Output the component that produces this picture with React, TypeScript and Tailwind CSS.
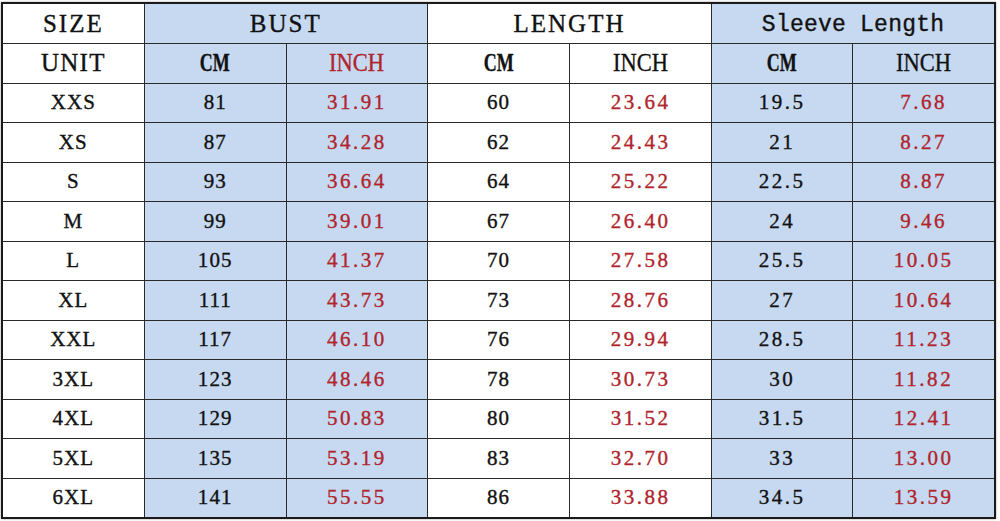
const rows: [string, string, string, string, string, string, string][] = [
  ["XXS", "81", "31.91", "60", "23.64", "19.5", "7.68"],
  ["XS", "87", "34.28", "62", "24.43", "21", "8.27"],
  ["S", "93", "36.64", "64", "25.22", "22.5", "8.87"],
  ["M", "99", "39.01", "67", "26.40", "24", "9.46"],
  ["L", "105", "41.37", "70", "27.58", "25.5", "10.05"],
  ["XL", "111", "43.73", "73", "28.76", "27", "10.64"],
  ["XXL", "117", "46.10", "76", "29.94", "28.5", "11.23"],
  ["3XL", "123", "48.46", "78", "30.73", "30", "11.82"],
  ["4XL", "129", "50.83", "80", "31.52", "31.5", "12.41"],
  ["5XL", "135", "53.19", "83", "32.70", "33", "13.00"],
  ["6XL", "141", "55.55", "86", "33.88", "34.5", "13.59"],
]

const blue = "bg-[#c6d9f0]"
const red = "text-[#b0242c]"
const cell = "border border-[#2a2a2a] text-center align-middle p-0 [-webkit-text-stroke:0.35px]"

// condensed unit labels
function Cm() {
  return <span className="inline-block font-bold scale-x-[0.72]">CM</span>
}
function Inch() {
  return <span className="inline-block scale-x-[0.9]">INCH</span>
}

export default function App() {
  return (
    <div className="w-[1000px] h-[521px] bg-white pl-[1px] pt-[2px] pr-[4px] pb-[3px]" style={{ fontFamily: '"Liberation Serif", serif' }}>
      <table className="w-full h-full border-collapse border-2 border-[#1a1a1a] table-fixed text-[#111] shadow-[0_0_2px_#999]">
        <colgroup>
          <col className="w-[142px]" />
          <col className="w-[142px]" />
          <col className="w-[141px]" />
          <col className="w-[142px]" />
          <col className="w-[142px]" />
          <col className="w-[141px]" />
          <col className="w-[142px]" />
        </colgroup>
        <tbody>
          <tr className="h-[39px] text-[25px] tracking-[0.08em]">
            <td className={cell}>SIZE</td>
            <td className={`${cell} ${blue}`} colSpan={2}>BUST</td>
            <td className={cell} colSpan={2}>LENGTH</td>
            <td className={`${cell} ${blue}`} colSpan={2}>
              <span className="text-[23px] tracking-[0.01em]" style={{ fontFamily: '"Liberation Mono", monospace' }}>Sleeve Length</span>
            </td>
          </tr>
          <tr className="h-[40px] text-[25px]">
            <td className={`${cell} tracking-[0.05em]`}>UNIT</td>
            <td className={`${cell} ${blue}`}><Cm /></td>
            <td className={`${cell} ${blue} ${red}`}><Inch /></td>
            <td className={cell}><Cm /></td>
            <td className={cell}><Inch /></td>
            <td className={`${cell} ${blue}`}><Cm /></td>
            <td className={`${cell} ${blue}`}><Inch /></td>
          </tr>
          {rows.map((r) => (
            <tr key={r[0]} className="h-[39.5px] text-[21px] tracking-[0.05em]">
              <td className={cell}>{r[0]}</td>
              <td className={`${cell} ${blue}`}>{r[1]}</td>
              <td className={`${cell} ${blue} ${red} tracking-[0.12em]`}>{r[2]}</td>
              <td className={cell}>{r[3]}</td>
              <td className={`${cell} ${red} tracking-[0.12em]`}>{r[4]}</td>
              <td className={`${cell} ${blue} tracking-[0.12em]`}>{r[5]}</td>
              <td className={`${cell} ${blue} ${red} tracking-[0.12em]`}>{r[6]}</td>
            </tr>
          ))}
        </tbody>
      </table>
    </div>
  )
}
